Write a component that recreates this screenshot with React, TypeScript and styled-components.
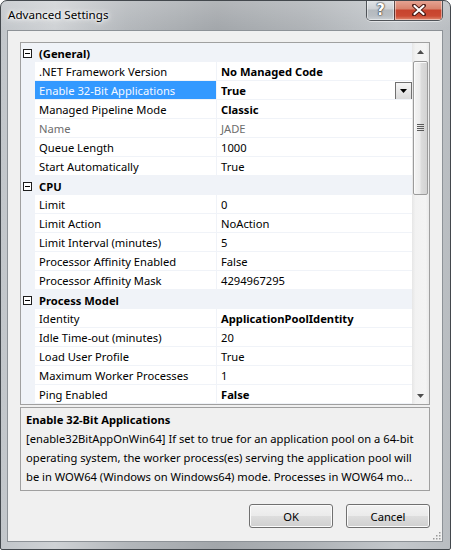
import React from 'react';
import styled, { createGlobalStyle } from 'styled-components';

const FONT = `"Noto Sans", "Liberation Sans", sans-serif`;
const SIZE = '11.2px';

const GlobalStyle = createGlobalStyle`
  html, body {
    margin: 0;
    padding: 0;
    background: #ffffff;
  }
  body {
    font-family: ${FONT};
    font-size: ${SIZE};
    color: #000;
  }
`;

const Window = styled.div`
  width: 451px;
  height: 550px;
  box-sizing: border-box;
  display: flex;
  flex-direction: column;
  padding: 0 7px 7px 6px;
  border: 1px solid #43484d;
  border-radius: 7px 7px 2px 2px;
  background:
    linear-gradient(180deg, rgba(255, 255, 255, 0.18), rgba(255, 255, 255, 0) 30px),
    linear-gradient(90deg, #c2c6ca 0%, #cfd2d5 12%, #b3b7bb 28%, #a2a6aa 48%, #aeb2b6 68%, #c3c7cb 88%, #b9bdc1 100%);
  overflow: hidden;
`;

const TitleBar = styled.div`
  height: 29px;
  display: flex;
  align-items: flex-start;
  flex-shrink: 0;
`;

const Title = styled.div`
  align-self: center;
  padding-left: 1px;
  margin-top: -2px;
  font-size: 11.6px;
  color: #000;
  text-shadow: 0 0 8px #fff, 0 0 5px #fff, 0 0 3px rgba(255, 255, 255, 0.8);
`;

const CaptionButtons = styled.div`
  margin-left: auto;
  margin-top: -1px;
  display: flex;
  border: 1px solid rgba(40, 44, 50, 0.75);
  border-top: none;
  border-radius: 0 0 5px 5px;
  overflow: hidden;
  box-shadow: 0 1px 0 rgba(255, 255, 255, 0.5);
`;

const CaptionButton = styled.div<{ $close?: boolean }>`
  width: ${(p) => (p.$close ? 47 : 27)}px;
  height: 20px;
  display: flex;
  align-items: center;
  justify-content: center;
  box-shadow: inset 0 0 0 1px rgba(255, 255, 255, 0.45);
  background: ${(p) =>
    p.$close
      ? 'linear-gradient(180deg, #e7a797 0%, #d8826c 45%, #c7432d 50%, #cb4a33 80%, #e08a70 100%)'
      : 'linear-gradient(180deg, #e3e6e9 0%, #cdd1d5 45%, #b4b9be 50%, #b9bec3 80%, #ccd1d5 100%)'};
  & + & {
    border-left: 1px solid rgba(40, 44, 50, 0.7);
  }
`;

const HelpGlyph = styled.span`
  font-family: "DejaVu Sans", ${FONT};
  font-weight: bold;
  font-size: 15px;
  line-height: 1;
  color: #fff;
  text-shadow: 0 0 1px #333, 0 0 1px #333, 0 0 2px #444;
`;

const Client = styled.div`
  flex: 1;
  position: relative;
  display: flex;
  flex-direction: column;
  padding: 11px 12px 0 12px;
  background: #f0f0f0;
  border: 1px solid #8d9297;
`;

const Grid = styled.div`
  height: 363px;
  box-sizing: border-box;
  display: flex;
  border: 1px solid #a0a0a0;
  background: #fff;
  flex-shrink: 0;
`;

const Rows = styled.div`
  flex: 1;
  overflow: hidden;
  display: flex;
  flex-direction: column;
`;

const LINE = '#f0f3f8';

const CategoryRow = styled.div`
  height: 19px;
  flex-shrink: 0;
  box-sizing: border-box;
  display: grid;
  grid-template-columns: 14px 1fr;
  align-items: center;
  background: ${LINE};
`;

const Expander = styled.div`
  display: flex;
  padding-left: 2px;
  padding-top: 1px;
`;

const CategoryLabel = styled.div`
  padding-left: 4px;
  padding-top: 2px;
  font-weight: bold;
  line-height: 17px;
`;

const PropRow = styled.div`
  height: 19px;
  flex-shrink: 0;
  box-sizing: border-box;
  display: grid;
  grid-template-columns: 14px 182px 1fr;
  border-bottom: 1px solid ${LINE};
`;

const Gutter = styled.div`
  background: ${LINE};
  margin-bottom: -1px;
`;

const NameCell = styled.div<{ $selected?: boolean; $disabled?: boolean }>`
  padding: 1px 0 0 4px;
  line-height: 17px;
  white-space: nowrap;
  overflow: hidden;
  border-right: 1px solid ${LINE};
  background: ${(p) => (p.$selected ? '#3399ff' : '#fff')};
  color: ${(p) => (p.$selected ? '#f4f8ff' : p.$disabled ? '#6d6d6d' : '#000')};
`;

const ValueCell = styled.div<{ $bold?: boolean; $disabled?: boolean }>`
  display: flex;
  align-items: flex-start;
  padding: 1px 0 0 4px;
  line-height: 17px;
  white-space: nowrap;
  overflow: hidden;
  font-weight: ${(p) => (p.$bold ? 'bold' : 'normal')};
  color: ${(p) => (p.$disabled ? '#6d6d6d' : '#000')};
`;

const DropButton = styled.div`
  margin-left: auto;
  width: 15px;
  height: 16px;
  border: 1px solid #707070;
  background: linear-gradient(180deg, #f6f6f6 0%, #e8e8e8 50%, #dadada 100%);
  display: flex;
  align-items: center;
  justify-content: center;
`;

const ScrollBar = styled.div`
  width: 17px;
  flex-shrink: 0;
  display: flex;
  flex-direction: column;
  background: linear-gradient(90deg, #e6e6e6 0%, #f2f2f2 20%, #f4f4f4 80%, #eaeaea 100%);
`;

const ScrollArrow = styled.div`
  height: 17px;
  display: flex;
  align-items: center;
  justify-content: center;
  flex-shrink: 0;
`;

const ScrollTrack = styled.div`
  flex: 1;
  display: flex;
  flex-direction: column;
  padding: 1px 1px 0 1px;
`;

const Thumb = styled.div`
  height: 134px;
  box-sizing: border-box;
  border: 1px solid #9b9b9b;
  border-radius: 2px;
  background: linear-gradient(90deg, #f4f4f4 0%, #ececec 45%, #dcdcdc 55%, #d2d2d2 100%);
  box-shadow: inset 1px 1px 0 #fbfbfb;
  display: flex;
  align-items: center;
  justify-content: center;
`;

const Description = styled.div`
  margin-top: 2px;
  height: 84px;
  box-sizing: border-box;
  flex-shrink: 0;
  border: 1px solid #a0a0a0;
  padding: 2px 5px 0 5px;
  line-height: 19px;
`;

const DescTitle = styled.div`
  font-weight: bold;
`;

const DescLine = styled.div`
  white-space: nowrap;
`;

const Footer = styled.div`
  display: flex;
  justify-content: flex-end;
  gap: 13px;
  margin-top: 13px;
`;

const DialogButton = styled.button`
  width: 84px;
  height: 24px;
  padding: 0;
  font-family: ${FONT};
  font-size: ${SIZE};
  color: #000;
  border: 1px solid #707070;
  border-radius: 3px;
  background: linear-gradient(180deg, #f2f2f2 0%, #ebebeb 48%, #dddddd 52%, #cfcfcf 100%);
  box-shadow: inset 0 0 0 1px #fbfbfb;
`;

const Grip = styled.svg`
  position: absolute;
  right: 1px;
  bottom: 1px;
`;

type Prop = {
  name: string;
  value: string;
  bold?: boolean;
  selected?: boolean;
  disabled?: boolean;
};

type Section = { title: string; items: Prop[] };

const sections: Section[] = [
  {
    title: '(General)',
    items: [
      { name: '.NET Framework Version', value: 'No Managed Code', bold: true },
      { name: 'Enable 32-Bit Applications', value: 'True', bold: true, selected: true },
      { name: 'Managed Pipeline Mode', value: 'Classic', bold: true },
      { name: 'Name', value: 'JADE', disabled: true },
      { name: 'Queue Length', value: '1000' },
      { name: 'Start Automatically', value: 'True' },
    ],
  },
  {
    title: 'CPU',
    items: [
      { name: 'Limit', value: '0' },
      { name: 'Limit Action', value: 'NoAction' },
      { name: 'Limit Interval (minutes)', value: '5' },
      { name: 'Processor Affinity Enabled', value: 'False' },
      { name: 'Processor Affinity Mask', value: '4294967295' },
    ],
  },
  {
    title: 'Process Model',
    items: [
      { name: 'Identity', value: 'ApplicationPoolIdentity', bold: true },
      { name: 'Idle Time-out (minutes)', value: '20' },
      { name: 'Load User Profile', value: 'True' },
      { name: 'Maximum Worker Processes', value: '1' },
      { name: 'Ping Enabled', value: 'False', bold: true },
    ],
  },
];

const MinusBox: React.FC = () => (
  <svg width="9" height="9" viewBox="0 0 9 9">
    <rect x="0.5" y="0.5" width="8" height="8" fill="#fff" stroke="#1e1e1e" />
    <rect x="2" y="4" width="5" height="1" fill="#000" />
  </svg>
);

const Triangle: React.FC<{ up?: boolean; color?: string }> = ({ up, color = '#000' }) => (
  <svg width="7" height="4" viewBox="0 0 7 4">
    <path d={up ? 'M0 4 L3.5 0 L7 4 Z' : 'M0 0 L7 0 L3.5 4 Z'} fill={color} />
  </svg>
);

const App: React.FC = () => {
  return (
    <>
      <GlobalStyle />
      <Window>
        <TitleBar>
          <Title>Advanced Settings</Title>
          <CaptionButtons>
            <CaptionButton>
              <HelpGlyph>?</HelpGlyph>
            </CaptionButton>
            <CaptionButton $close>
              <svg width="14" height="12" viewBox="0 0 14 12">
                <path d="M2 1.5 L12 10.5 M12 1.5 L2 10.5" stroke="#4a1a14" strokeWidth="4" strokeLinecap="round" />
                <path d="M2.5 2 L11.5 10 M11.5 2 L2.5 10" stroke="#fff" strokeWidth="2.2" strokeLinecap="round" />
              </svg>
            </CaptionButton>
          </CaptionButtons>
        </TitleBar>
        <Client>
          <Grid>
            <Rows>
              {sections.map((section) => (
                <React.Fragment key={section.title}>
                  <CategoryRow>
                    <Expander>
                      <MinusBox />
                    </Expander>
                    <CategoryLabel>{section.title}</CategoryLabel>
                  </CategoryRow>
                  {section.items.map((item) => (
                    <PropRow key={item.name}>
                      <Gutter />
                      <NameCell $selected={item.selected} $disabled={item.disabled}>
                        {item.name}
                      </NameCell>
                      <ValueCell $bold={item.bold} $disabled={item.disabled}>
                        {item.value}
                        {item.selected && (
                          <DropButton>
                            <Triangle />
                          </DropButton>
                        )}
                      </ValueCell>
                    </PropRow>
                  ))}
                </React.Fragment>
              ))}
            </Rows>
            <ScrollBar>
              <ScrollArrow>
                <Triangle up color="#4d4d4d" />
              </ScrollArrow>
              <ScrollTrack>
                <Thumb>
                  <svg width="7" height="8" viewBox="0 0 7 8">
                    {[0, 2, 4, 6].map((y) => (
                      <rect key={y} x="0" y={y} width="7" height="1" fill="#5a5a5a" />
                    ))}
                  </svg>
                </Thumb>
              </ScrollTrack>
              <ScrollArrow>
                <Triangle color="#4d4d4d" />
              </ScrollArrow>
            </ScrollBar>
          </Grid>
          <Description>
            <DescTitle>Enable 32-Bit Applications</DescTitle>
            <DescLine>[enable32BitAppOnWin64] If set to true for an application pool on a 64-bit</DescLine>
            <DescLine>operating system, the worker process(es) serving the application pool will</DescLine>
            <DescLine>be in WOW64 (Windows on Windows64) mode. Processes in WOW64 mo...</DescLine>
          </Description>
          <Footer>
            <DialogButton>OK</DialogButton>
            <DialogButton>Cancel</DialogButton>
          </Footer>
          <Grip width="9" height="9" viewBox="0 0 9 9">
            {[
              [7, 1],
              [4, 4],
              [7, 4],
              [1, 7],
              [4, 7],
              [7, 7],
            ].map(([x, y]) => (
              <rect key={`${x}-${y}`} x={x} y={y} width="1.5" height="1.5" fill="#9a9a9a" />
            ))}
          </Grip>
        </Client>
      </Window>
    </>
  );
};

export default App;
